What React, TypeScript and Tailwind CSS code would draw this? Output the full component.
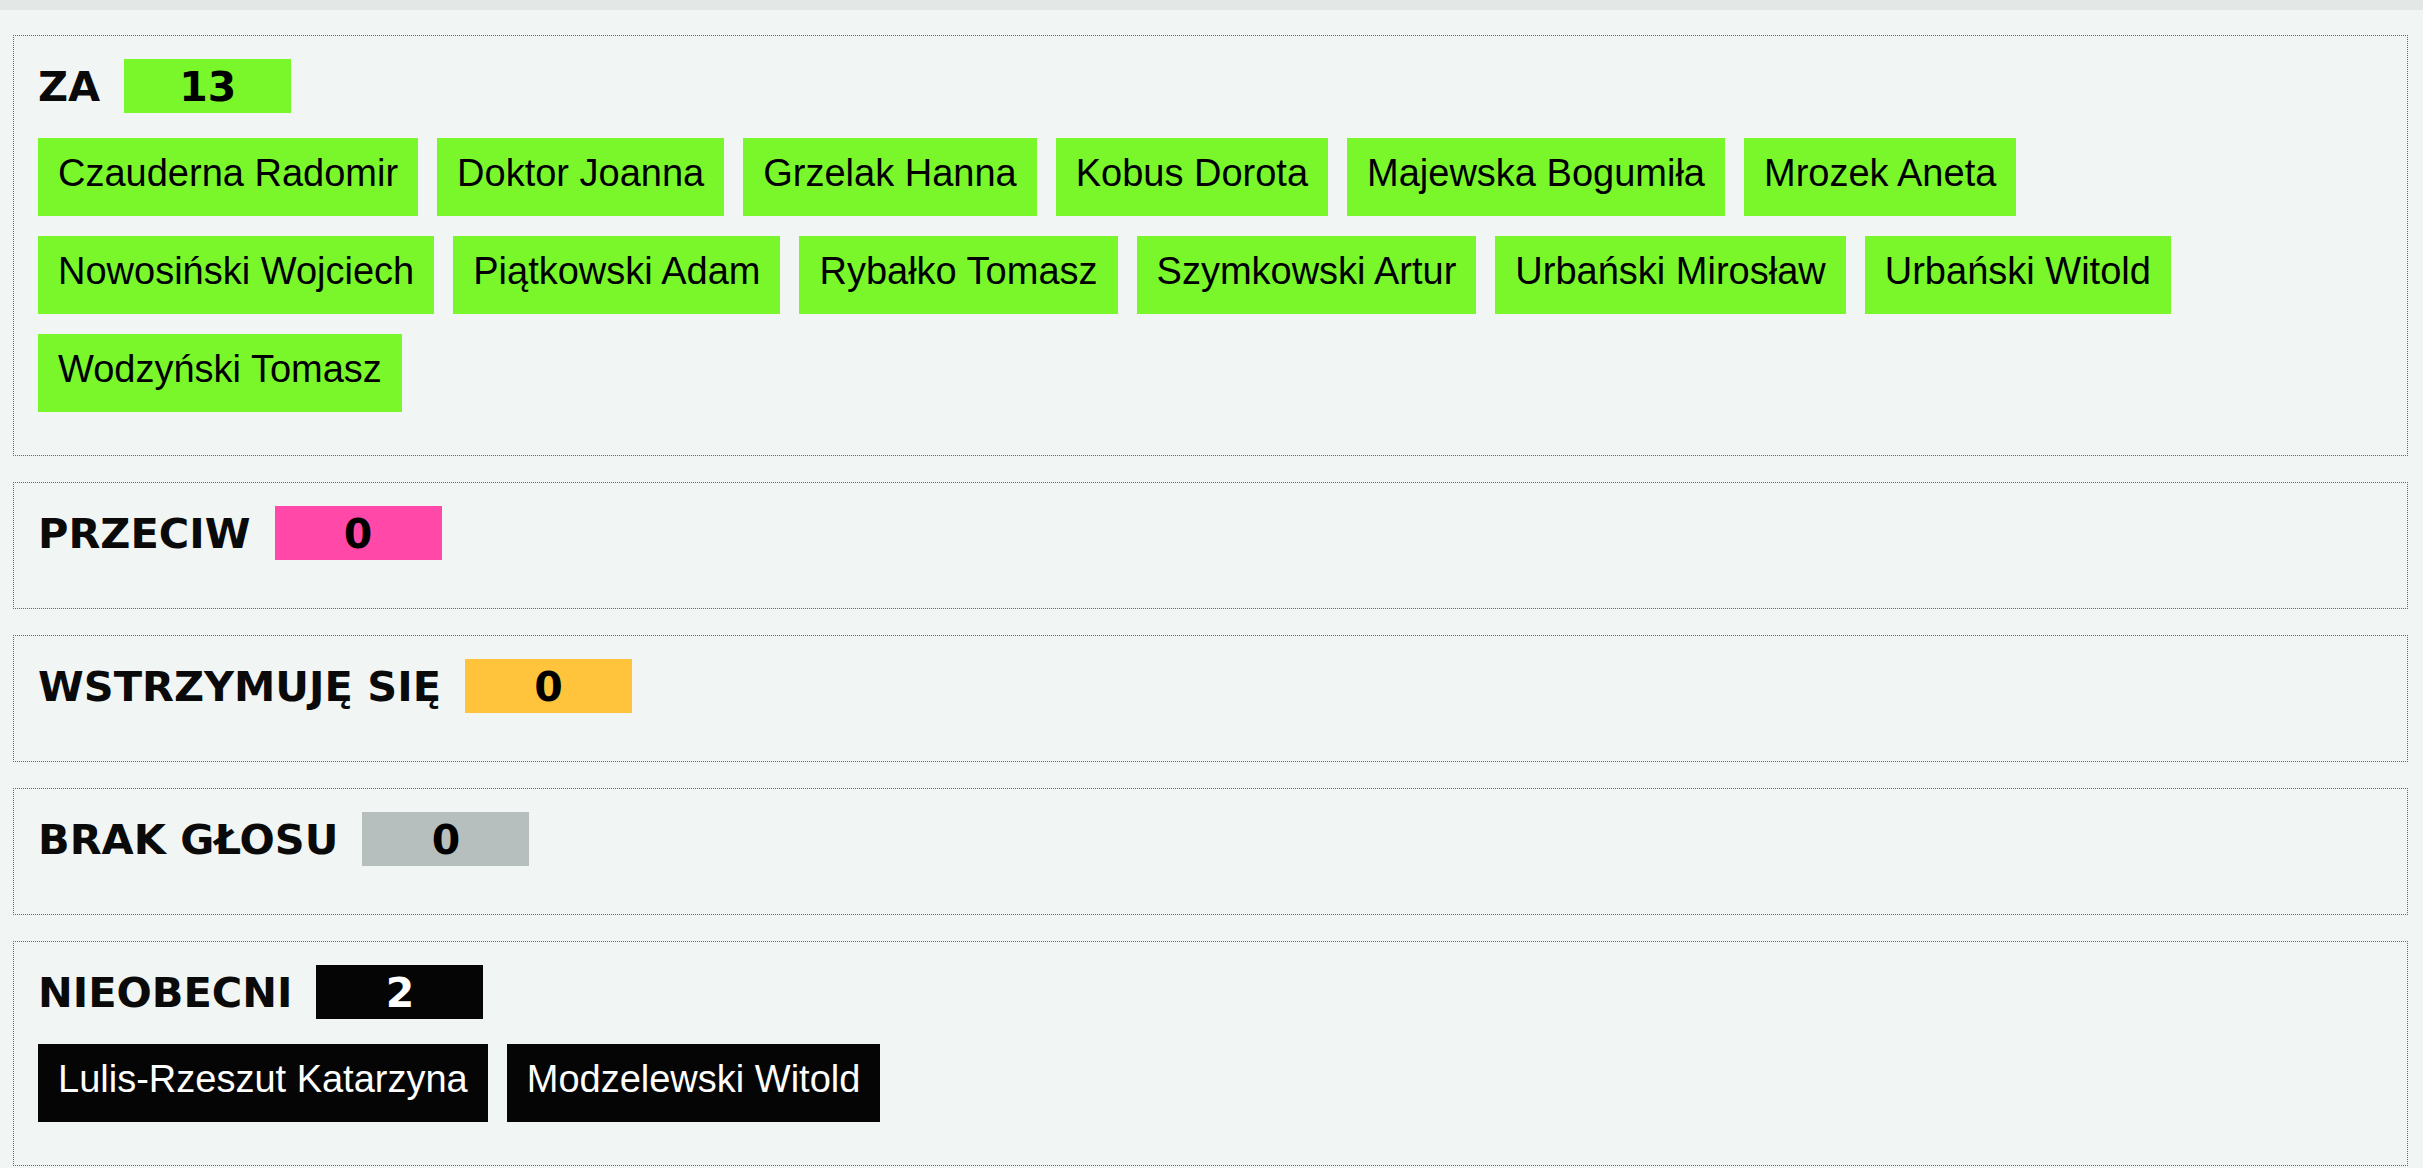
import React from "react";

type Section = {
  label: string;
  count: number;
  badge: string;
  chip: string;
  names: string[];
};

const sections: Section[] = [
  {
    label: "ZA",
    count: 13,
    badge: "bg-[#79f72b] text-black",
    chip: "bg-[#79f72b] text-black",
    names: [
      "Czauderna Radomir",
      "Doktor Joanna",
      "Grzelak Hanna",
      "Kobus Dorota",
      "Majewska Bogumiła",
      "Mrozek Aneta",
      "Nowosiński Wojciech",
      "Piątkowski Adam",
      "Rybałko Tomasz",
      "Szymkowski Artur",
      "Urbański Mirosław",
      "Urbański Witold",
      "Wodzyński Tomasz",
    ],
  },
  { label: "PRZECIW", count: 0, badge: "bg-[#ff48a8] text-black", chip: "", names: [] },
  { label: "WSTRZYMUJĘ SIĘ", count: 0, badge: "bg-[#ffc33c] text-black", chip: "", names: [] },
  { label: "BRAK GŁOSU", count: 0, badge: "bg-[#b7bfbe] text-black", chip: "", names: [] },
  {
    label: "NIEOBECNI",
    count: 2,
    badge: "bg-[#050505] text-white",
    chip: "bg-[#050505] text-white",
    names: ["Lulis-Rzeszut Katarzyna", "Modzelewski Witold"],
  },
];

function VoteBox({ s }: { s: Section }) {
  return (
    <div className="border border-dotted border-[#5e6c6b] px-[24px] py-[23px]">
      <div className="flex items-center h-[54px] mb-[25px]">
        <span className="font-['DejaVu_Sans',Verdana,sans-serif] font-bold text-[41.5px] leading-none text-[#0a0a0a] mr-[24px] pt-[2px]">
          {s.label}
        </span>
        <span
          className={`w-[167px] h-[54px] flex items-center justify-center font-['DejaVu_Sans',Verdana,sans-serif] font-bold text-[41px] leading-none pt-[2px] ${s.badge}`}
        >
          {s.count}
        </span>
      </div>
      {s.names.length > 0 && (
        <div className="flex flex-wrap gap-x-[19px] gap-y-[20px] mb-[20px]">
          {s.names.map((n) => (
            <span
              key={n}
              className={`h-[78px] px-[20px] pt-[14px] font-['Liberation_Sans',Arial,sans-serif] text-[38px] leading-[1.15] whitespace-nowrap ${s.chip}`}
            >
              {n}
            </span>
          ))}
        </div>
      )}
    </div>
  );
}

export default function App() {
  return (
    <div className="w-[2423px] h-[1168px] overflow-hidden bg-[#f1f5f4]">
      <div className="h-[10px] bg-[#e3e8e7]" />
      <div className="pt-[25px] pl-[13px] w-[2408px] flex flex-col gap-[26px]">
        {sections.map((s) => (
          <VoteBox key={s.label} s={s} />
        ))}
      </div>
    </div>
  );
}
